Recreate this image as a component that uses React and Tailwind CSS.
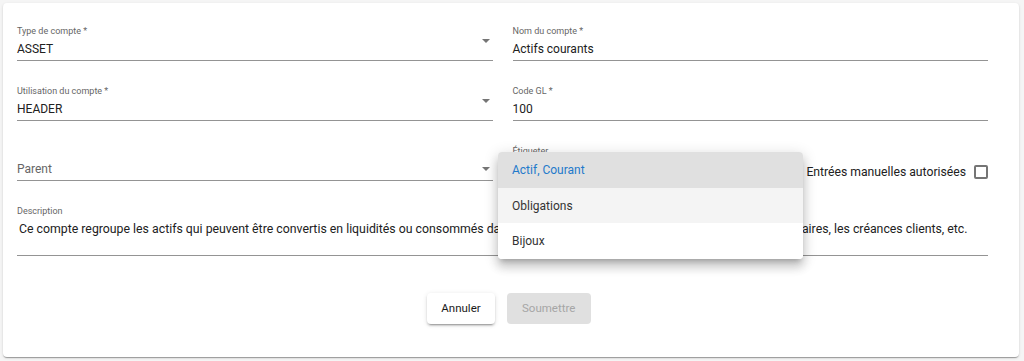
const textMain = "text-[#212121]";

function DropArrow({ className }) {
  return (
    <svg viewBox="0 0 10 5" className={"absolute w-[8px] h-[4px] fill-[#757575] " + className}>
      <path d="M0 0l5 5 5-5z" />
    </svg>
  );
}

function Field({ label, value, placeholder, arrowTop, className = "" }) {
  return (
    <div className={"relative h-[36px] border-b border-[#949494] " + className}>
      <div className="h-[12px] text-[9px] leading-[12px] text-[#666]">{label}</div>
      <div className={"h-[23px] pt-[1px] text-[12px] leading-[23px] " + (placeholder ? "text-[#666]" : textMain)}>
        {value || placeholder}
      </div>
      {arrowTop && <DropArrow className={"right-[3px] " + arrowTop} />}
    </div>
  );
}

const menuItems = [
  { label: "Actif, Courant", cls: "bg-[#e0e0e0] text-[#1f7acb]" },
  { label: "Obligations", cls: "bg-[#f4f4f4] text-[#333]" },
  { label: "Bijoux", cls: "bg-white text-[#333]" },
];

export default function App() {
  return (
    <div className="min-h-[361px] bg-[#f5f5f5] p-[3px] font-['Roboto',sans-serif]">
      <div className="relative w-[1016px] h-[354px] rounded-[4px] bg-white pl-[14px] pr-[31px] pt-[22px] shadow-[0_2px_1px_-1px_rgba(0,0,0,0.2),0_1px_1px_0_rgba(0,0,0,0.14),0_1px_3px_0_rgba(0,0,0,0.12)]">
        <div className="grid grid-cols-2 gap-x-[20px] gap-y-[24px]">
          <Field label="Type de compte *" value="ASSET" arrowTop="top-[14px]" />
          <Field label="Nom du compte *" value="Actifs courants" />
          <Field label="Utilisation du compte *" value="HEADER" arrowTop="top-[14px]" />
          <Field label="Code GL *" value="100" />
          <Field label="" placeholder="Parent" arrowTop="top-[22px]" />

          <div className="flex items-start">
            <Field label="Étiqueter" value="" className="flex-1 mr-[13px]" />
            <div className="mt-[18px] flex items-center h-[18px]">
              <span className={"text-[12.2px] leading-[18px] " + textMain}>Entrées manuelles autorisées</span>
              <span className="ml-[8px] w-[14px] h-[14px] rounded-[2px] border-2 border-[#757575]"></span>
            </div>
          </div>

          <div className="col-span-2 h-[51px] border-b border-[#949494]">
            <div className="h-[12px] text-[9px] leading-[12px] text-[#666]">Description</div>
            <div className={"pt-[5px] pl-[2px] text-[12.3px] leading-[14px] whitespace-nowrap " + textMain}>
              Ce compte regroupe les actifs qui peuvent être convertis en liquidités ou consommés dans l'année, tels que la trésorerie, les placements temporaires, les créances clients, etc.
            </div>
          </div>
        </div>

        <div className="mt-[37px] pl-[13px] flex justify-center gap-[12px]">
          <button
            type="button"
            className="h-[31px] px-[14px] rounded-[4px] bg-white text-[11.5px] text-[#1a1a1a] shadow-[0_3px_1px_-2px_rgba(0,0,0,0.2),0_2px_2px_0_rgba(0,0,0,0.14),0_1px_5px_0_rgba(0,0,0,0.12)]"
          >
            Annuler
          </button>
          <button
            type="button"
            disabled
            className="h-[31px] w-[84px] rounded-[4px] bg-[#e0e0e0] text-[11.5px] text-[#a6a6a6]"
          >
            Soumettre
          </button>
        </div>

        <ul className="absolute left-[495px] top-[149px] w-[305px] rounded-[4px] bg-white overflow-hidden shadow-[0_5px_5px_-3px_rgba(0,0,0,0.2),0_8px_10px_1px_rgba(0,0,0,0.14),0_3px_14px_2px_rgba(0,0,0,0.12)]">
          {menuItems.map(item => (
            <li key={item.label} className={"h-[35.7px] flex items-center px-[14px] text-[12px] " + item.cls}>
              {item.label}
            </li>
          ))}
        </ul>
      </div>
    </div>
  );
}
